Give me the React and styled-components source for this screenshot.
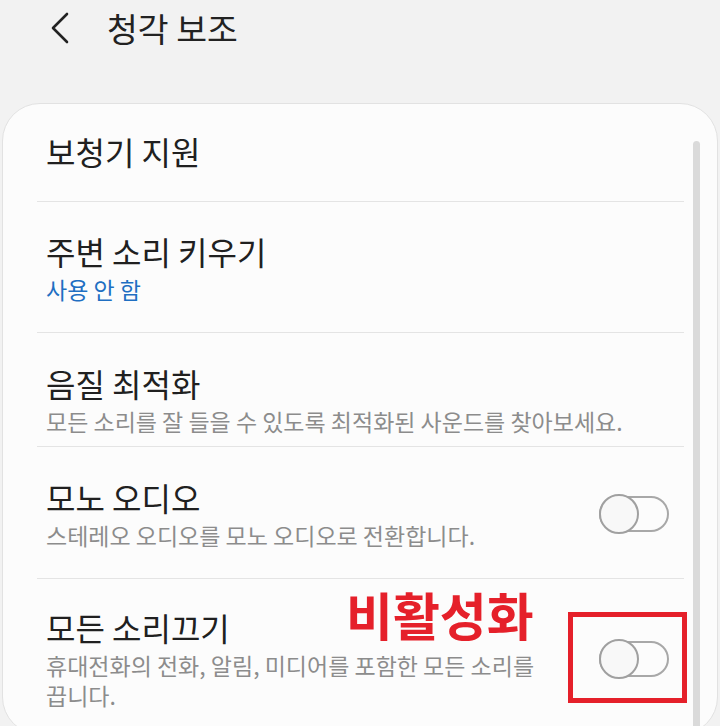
import React from 'react'
import styled, { createGlobalStyle } from 'styled-components'

const GlobalStyle = createGlobalStyle`
    html, body {
        margin: 0;
        padding: 0;
        height: 726px;
        overflow: hidden;
        background: #f2f2f2;
        font-family: "Noto Sans CJK KR", "Noto Sans", sans-serif;
    }
`;

const Page = styled.div`
    width: 720px;
    height: 726px;
    overflow: hidden;
    background: #f2f2f2;
`;

const Header = styled.div`
    height: 56px;
    display: flex;
    align-items: center;
    padding-left: 49px;
    margin-bottom: 47px;
`;

const BackButton = styled.div`
    width: 21px;
    height: 32px;
    display: flex;
    align-items: center;
    margin-right: 37px;
`;

const HeaderTitle = styled.h1`
    margin: 0;
    font-size: 33.5px;
    font-weight: 400;
    line-height: 40px;
    color: #222;
`;

const Card = styled.div`
    margin: 0 2px;
    height: 632px;
    background: #fcfcfc;
    border: 1px solid #e2e2e2;
    border-radius: 38px;
    display: flex;
    box-sizing: border-box;
`;

const List = styled.div`
    flex: 1;
    margin-left: 34px;
`;

const ScrollThumb = styled.div`
    width: 7px;
    margin: 37px 17px 0 9px;
    background: #dadada;
    border-radius: 4px 4px 0 0;
`;

const Row = styled.div`
    position: relative;
    display: flex;
    align-items: center;
    padding: ${p => p.$pt}px 15px ${p => p.$pb}px 9px;
    border-top: ${p => (p.$first ? 'none' : '1px solid #e4e4e4')};
`;

const Texts = styled.div`
    flex: 1;
    display: flex;
    flex-direction: column;
`;

const Title = styled.div`
    font-size: 32px;
    line-height: 40px;
    color: #202020;
`;

const Sub = styled.div`
    margin-top: 3px;
    font-size: 23px;
    line-height: 30px;
    color: ${p => (p.$blue ? '#1f6fc2' : '#8c8c8c')};
`;

const Switch = styled.div`
    position: relative;
    width: 70px;
    height: 40px;
    display: flex;
    align-items: center;
`;

const Track = styled.div`
    width: 70px;
    height: 36px;
    box-sizing: border-box;
    border: 2px solid #a8a8a8;
    border-radius: 18px;
`;

const Knob = styled.div`
    position: absolute;
    left: 0;
    top: 0;
    width: 40px;
    height: 40px;
    box-sizing: border-box;
    border: 2px solid #a0a0a0;
    border-radius: 50%;
    background: #f8f8f8;
`;

const Note = styled.div`
    position: absolute;
    left: 309px;
    top: 10px;
    font-size: 51px;
    line-height: 51px;
    font-weight: 700;
    color: #e5202a;
`;

const Mark = styled.div`
    position: absolute;
    left: 531px;
    top: 33px;
    width: 119px;
    height: 91px;
    box-sizing: border-box;
    border: 5px solid #e5202a;
`;

const Toggle = () => (
    <Switch>
        <Track />
        <Knob />
    </Switch>
)

const App = () => {
  return (
    <Page>
        <GlobalStyle />
        <Header>
            <BackButton>
                <svg width="21" height="32" viewBox="0 0 21 32">
                    <path d="M18 2 L4 16 L18 30" fill="none" stroke="#222" strokeWidth="2.6" strokeLinecap="round" strokeLinejoin="round" />
                </svg>
            </BackButton>
            <HeaderTitle>청각 보조</HeaderTitle>
        </Header>
        <Card>
            <List>
                <Row $first $pt={27} $pb={30}>
                    <Texts>
                        <Title>보청기 지원</Title>
                    </Texts>
                </Row>
                <Row $pt={29} $pb={28}>
                    <Texts>
                        <Title>주변 소리 키우기</Title>
                        <Sub $blue>사용 안 함</Sub>
                    </Texts>
                </Row>
                <Row $pt={30} $pb={10}>
                    <Texts>
                        <Title>음질 최적화</Title>
                        <Sub>모든 소리를 잘 들을 수 있도록 최적화된 사운드를 찾아보세요.</Sub>
                    </Texts>
                </Row>
                <Row $pt={30} $pb={28}>
                    <Texts>
                        <Title>모노 오디오</Title>
                        <Sub>스테레오 오디오를 모노 오디오로 전환합니다.</Sub>
                    </Texts>
                    <Toggle />
                </Row>
                <Row $pt={28} $pb={22}>
                    <Texts>
                        <Title>모든 소리끄기</Title>
                        <Sub>휴대전화의 전화, 알림, 미디어를 포함한 모든 소리를<br />끕니다.</Sub>
                    </Texts>
                    <Toggle />
                    <Note>비활성화</Note>
                    <Mark />
                </Row>
            </List>
            <ScrollThumb />
        </Card>
    </Page>
  )
}

export default App
